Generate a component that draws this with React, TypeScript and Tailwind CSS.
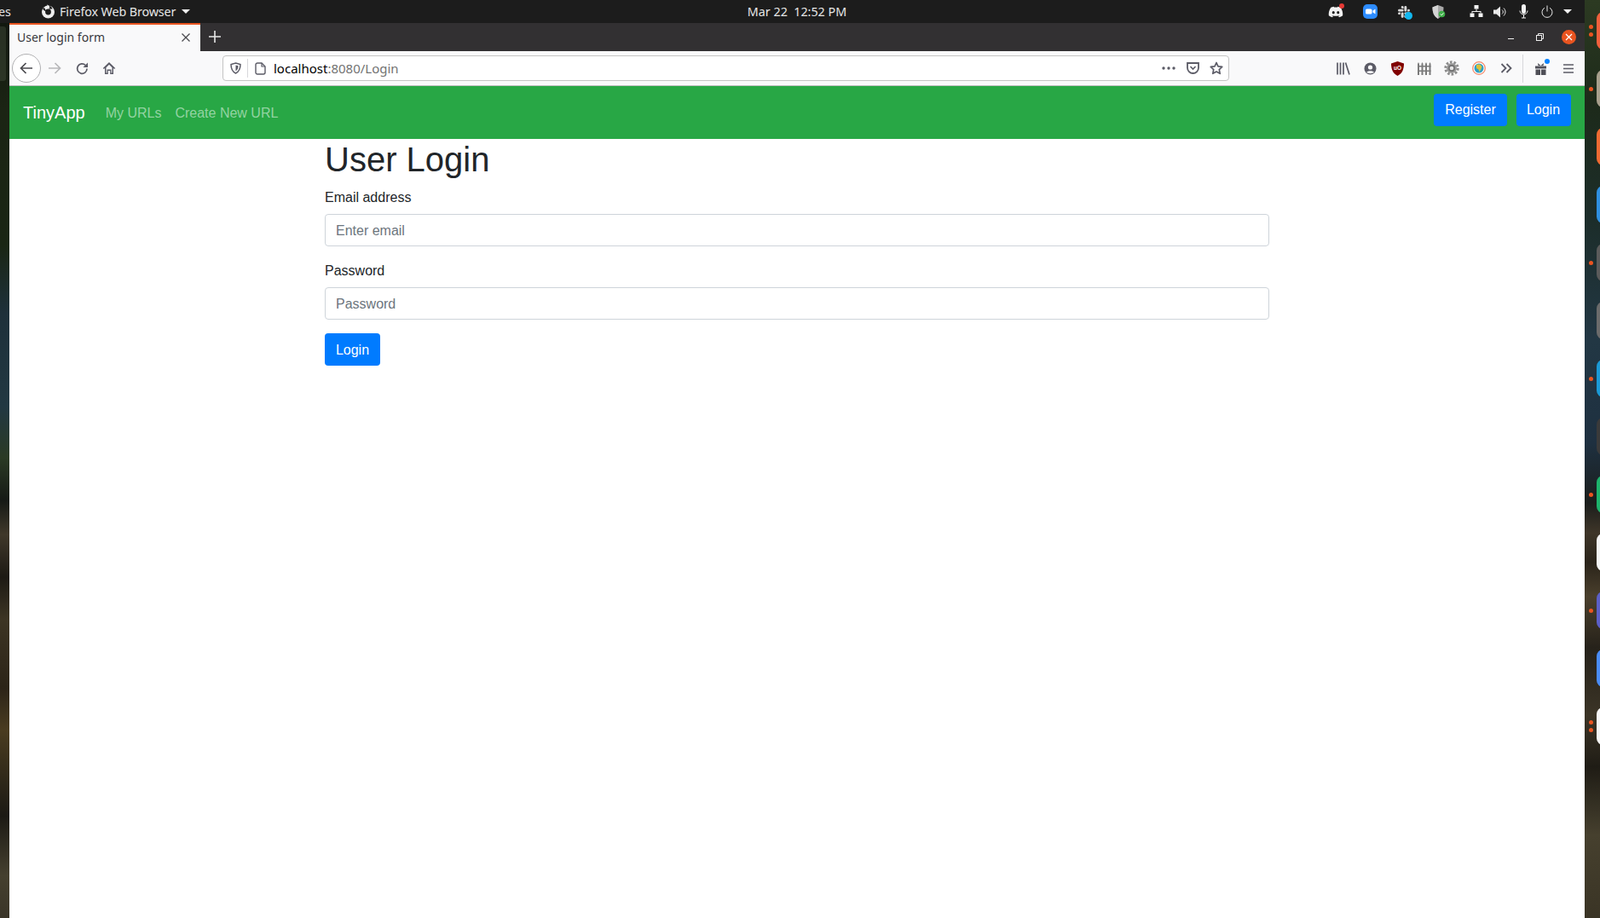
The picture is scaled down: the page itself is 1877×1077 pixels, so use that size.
import React from "react";
import { FaDiscord } from "react-icons/fa";
import { SiSlack } from "react-icons/si";

const ui = "font-['Noto_Sans','Open_Sans',sans-serif]";
const web = "font-['Liberation_Sans',Arial,sans-serif]";

const wallpaperRight =
  "bg-[linear-gradient(180deg,#2c3a22_0px,#1d2a1a_120px,#1c2d2a_260px,#223744_400px,#1e3040_520px,#1b1e1c_590px,#3e3528_625px,#2a241a_660px,#4a3f2c_700px,#26221a_760px,#3b3426_840px,#1f1c15_900px,#46402e_980px,#3a3425_1077px)]";
const wallpaperLeft =
  "bg-[linear-gradient(180deg,#12180f_0px,#1b2414_100px,#1a2614_260px,#1e303a_340px,#223842_450px,#2a3a24_510px,#161a16_560px,#40382a_600px,#1d1a14_650px,#3d3524_700px,#2c2418_780px,#4a3c20_830px,#1c1a14_930px,#45402f_1000px,#3a3528_1050px)]";

function Slot({ w, children }: { w: number; children: React.ReactNode }) {
  return (
    <div className="flex shrink-0 items-center justify-center" style={{ width: w }}>
      {children}
    </div>
  );
}

function TopBar() {
  return (
    <div className={`${ui} flex h-[27px] shrink-0 items-center bg-[#1c1c1c] text-[#e6e6e6] text-[14.3px]`}>
      <div className="flex w-[870px] shrink-0 items-center">
        <span className="ml-[-2px] w-[50px] overflow-hidden whitespace-nowrap">es</span>
        <svg width="17" height="17" viewBox="0 0 17 17" className="shrink-0">
          <circle cx="8.5" cy="9" r="7.5" fill="#eeeeee" />
          <circle cx="8.5" cy="9" r="3.4" fill="#1c1c1c" />
          <path d="M10 1c1 1.6 3 2 3.6 4.4L9.500 5.500 10 1zM2 5c1 2 2 3 4.500 3.500L4 4z" fill="#1c1c1c" />
          <path d="M7 .5c2 .5 3 2 3.500 3.500l-2 .5z" fill="#eeeeee" />
        </svg>
        <span className="ml-[5px] whitespace-nowrap tracking-[-0.1px]">Firefox Web Browser</span>
        <svg width="10" height="5" viewBox="0 0 10 5" className="ml-[7px] shrink-0"><path d="M0 0h10L5 5z" fill="#eeeeee" /></svg>
      </div>
      <span className="w-[130px] shrink-0 whitespace-pre text-center">Mar 22  12:52 PM</span>
      <div className="flex-1" />
      <div className="flex items-center">
        <Slot w={24}><span className="relative"><FaDiscord size={18} color="#f2f2f2" /><span className="absolute right-[-1px] top-[-1px] h-[6px] w-[6px] rounded-full bg-[#e53935]" /></span></Slot>
        <Slot w={56}>
          <svg width="17" height="17" viewBox="0 0 17 17"><rect width="17" height="17" rx="5" fill="#2d8cff" /><rect x="3" y="5.500" width="7.500" height="6" rx="1.500" fill="#fff" /><path d="M11.500 7.500l3-2v6l-3-2z" fill="#fff" /></svg>
        </Slot>
        <Slot w={24}><span className="relative"><SiSlack size={14} color="#d8d8d8" /><span className="absolute bottom-[-2px] right-[-3px] h-[9px] w-[9px] rounded-full bg-[#12b8f0]" /></span></Slot>
        <Slot w={58}>
          <svg width="18" height="18" viewBox="0 0 18 18"><path d="M8 1l6.500 2.500c0 6-1.500 10.500-6.500 13.500C3 14 1.500 9.500 1.500 3.500z" fill="#a8a8a8" /><path d="M8 1L1.500 3.500C1.500 9.500 3 14 8 17z" fill="#d4d4d4" /><circle cx="12.500" cy="11.500" r="3.800" fill="#3fae49" /><path d="M10.800 11.500l1.300 1.300 2.200-2.400" stroke="#fff" strokeWidth="1" fill="none" /></svg>
        </Slot>
        <Slot w={30}>
          <svg width="16" height="15" viewBox="0 0 16 15" fill="#f2f2f2"><rect x="5.500" y="0" width="5" height="4.500" /><rect x="0.500" y="9.500" width="5" height="4.500" /><rect x="10.500" y="9.500" width="5" height="4.500" /><path d="M7.500 4.500h1v2.500h5V9.500h-1V8h-9v1.500h-1V7h5z" /></svg>
        </Slot>
        <Slot w={26}>
          <svg width="16" height="14" viewBox="0 0 16 14"><path d="M0 4.500h3.500L8 .5v13L3.500 9.500H0z" fill="#e8e8e8" /><path d="M10 4.500a3 3 0 010 5M12 2.500a6 6 0 010 9" stroke="#e8e8e8" strokeWidth="1" fill="none" /></svg>
        </Slot>
        <Slot w={28}>
          <svg width="11" height="17" viewBox="0 0 11 17"><rect x="3" y="0" width="5" height="11" rx="2.500" fill="#f2f2f2" /><path d="M1 7.500a4.500 4.500 0 009 0M5.500 12v4M3 16h5" stroke="#f2f2f2" strokeWidth="1" fill="none" /></svg>
        </Slot>
        <Slot w={28}>
          <svg width="14" height="15" viewBox="0 0 14 15"><path d="M4 3.200a6 6 0 106 0M7 .5v7" stroke="#e8e8e8" strokeWidth="1" fill="none" /></svg>
        </Slot>
        <Slot w={20}><svg width="10" height="5" viewBox="0 0 10 5"><path d="M0 0h10L5 5z" fill="#f2f2f2" /></svg></Slot>
        <div className="w-[10px]" />
      </div>
    </div>
  );
}

function TabStrip() {
  return (
    <div className={`${ui} flex h-[33px] shrink-0 items-stretch bg-[#323032]`}>
      <div className="flex w-[224px] shrink-0 items-center border-t-2 border-[#e95420] bg-[#f9f9fa] pb-[2px] pl-[9px] pr-[12px] text-[14px] text-[#38383d]">
        <span className="flex-1 whitespace-nowrap">User login form</span>
        <svg width="10" height="10" viewBox="0 0 10 10"><path d="M.5.5l9 9M9.500.5l-9 9" stroke="#4a4a4f" strokeWidth="1.300" /></svg>
      </div>
      <div className="flex w-[34px] items-center justify-center pb-[1px]">
        <svg width="14" height="14" viewBox="0 0 14 14"><path d="M7 0v14M0 7h14" stroke="#e8e8e8" strokeWidth="1.600" /></svg>
      </div>
      <div className="flex-1" />
      <div className="flex items-center pr-[2px]">
        <Slot w={34}><div className="mt-[3px] h-[1px] w-[7px] bg-[#f0f0f0]" /></Slot>
        <Slot w={34}>
          <svg width="9" height="9" viewBox="0 0 9 9"><rect x=".5" y="2.500" width="6" height="6" fill="none" stroke="#f0f0f0" /><path d="M2.500 2.500V.5h6v6h-2" fill="none" stroke="#f0f0f0" /></svg>
        </Slot>
        <Slot w={34}>
          <div className="flex h-[17px] w-[17px] items-center justify-center rounded-full bg-[#e95420]">
            <svg width="9" height="9" viewBox="0 0 9 9"><path d="M1 1l7 7M8 1L1 8" stroke="#fff" strokeWidth="1.200" /></svg>
          </div>
        </Slot>
      </div>
    </div>
  );
}

const grey = "#5b5b66";

function Toolbar() {
  return (
    <div className={`${ui} flex h-[41px] shrink-0 items-center border-b border-[#bdbdbd] bg-[#f9f9fa]`}>
      <div className="ml-[3px] flex h-[34px] w-[34px] shrink-0 items-center justify-center rounded-full border border-[#b1b1b3] bg-white">
        <svg width="16" height="14" viewBox="0 0 16 14"><path d="M15 7H1.500M7.500 1l-6 6 6 6" stroke="#4a4a4f" strokeWidth="1.700" fill="none" /></svg>
      </div>
      <Slot w={32}>
        <svg width="16" height="14" viewBox="0 0 16 14"><path d="M1 7h13.500M8.500 1l6 6-6 6" stroke="#b8b8ba" strokeWidth="1.700" fill="none" /></svg>
      </Slot>
      <Slot w={32}>
        <svg width="15" height="15" viewBox="0 0 15 15"><path d="M13 7.500a5.700 5.700 0 11-1.700-4" stroke={grey} strokeWidth="1.700" fill="none" /><path d="M14 .5v5.500H8.500z" fill={grey} /></svg>
      </Slot>
      <Slot w={32}>
        <svg width="16" height="16" viewBox="0 0 16 16"><path d="M8 1L.8 8l1 1L3 8v7h3.800v-4h2.400v4H13V8l1.200 1 1-1z" fill={grey} /><path d="M4.500 7.300L8 3.800l3.500 3.500v6.200h-1v-4h-5v4h-1z" fill="#f9f9fa" /><rect x="6.500" y="10" width="3" height="1" fill={grey} /></svg>
      </Slot>
      <div className="ml-[117px] flex h-[30px] w-[1181px] shrink-0 items-center rounded-[4px] border border-[#c4c4c4] bg-white">
        <div className="flex h-[22px] w-[29px] shrink-0 items-center justify-center border-r border-[#d7d7db]">
          <svg width="13" height="14" viewBox="0 0 13 14"><path d="M6.500 1L12 2.500c0 5-1.500 8.500-5.500 10.500C2.500 11 1 7.500 1 2.500z" fill="none" stroke={grey} strokeWidth="1.500" /><path d="M6.500 3.500l3 .8c0 2.700-1 5-3 6.200z" fill={grey} /></svg>
        </div>
        <div className="flex w-[29px] shrink-0 justify-center">
          <svg width="13" height="15" viewBox="0 0 13 15"><path d="M1 3a2 2 0 012-2h5l4 4v7a2 2 0 01-2 2H3a2 2 0 01-2-2z" fill="none" stroke={grey} strokeWidth="1.400" /><path d="M8 1v4h4" fill="none" stroke={grey} strokeWidth="1.200" /></svg>
        </div>
        <span className="ml-[1px] whitespace-nowrap text-[15px] text-black">localhost<span className="text-[#737373]">:8080/Login</span></span>
        <div className="flex-1" />
        <Slot w={28}>
          <svg width="16" height="4" viewBox="0 0 16 4" fill={grey}><circle cx="2" cy="2" r="1.700" /><circle cx="8" cy="2" r="1.700" /><circle cx="14" cy="2" r="1.700" /></svg>
        </Slot>
        <Slot w={28}>
          <svg width="15" height="14" viewBox="0 0 15 14"><path d="M1 1h13v5.500a6.500 6.500 0 01-13 0z" fill="none" stroke={grey} strokeWidth="1.800" /><path d="M4.500 5l3 3 3-3" fill="none" stroke={grey} strokeWidth="1.600" /></svg>
        </Slot>
        <Slot w={28}>
          <svg width="16" height="16" viewBox="0 0 16 16"><path d="M8 1.500l2 4.300 4.700.6-3.400 3.200.9 4.700L8 12l-4.200 2.300.9-4.700L1.300 6.400 6 5.800z" fill="none" stroke={grey} strokeWidth="1.700" strokeLinejoin="round" /></svg>
        </Slot>
      </div>
      <div className="ml-[118px] flex items-center">
        <Slot w={31}>
          <svg width="16" height="15" viewBox="0 0 16 15" stroke={grey} strokeWidth="1.700" fill="none"><path d="M1 .5v14M4.500.5v14M8 .5v14M10.500.5l4.500 14" /></svg>
        </Slot>
        <Slot w={32}>
          <svg width="15" height="15" viewBox="0 0 15 15"><circle cx="7.500" cy="7.500" r="7" fill={grey} /><circle cx="7.500" cy="6" r="2.600" fill="#f9f9fa" /><path d="M3 12c1-2.500 8-2.500 9 0-2.500 1.500-6.500 1.500-9 0z" fill="#f9f9fa" /></svg>
        </Slot>
        <Slot w={32}>
          <svg width="15" height="17" viewBox="0 0 15 17"><path d="M7.500 0L15 2.500c0 7-2 11.500-7.500 14.500C2 14 0 9.500 0 2.500z" fill="#800000" /><text x="7.500" y="10" textAnchor="middle" fontSize="6.500" fontWeight="700" fill="#ffffff" fontFamily="Liberation Sans">uO</text></svg>
        </Slot>
        <Slot w={32}>
          <svg width="16" height="15" viewBox="0 0 16 15" fill="#7a7a7a"><path d="M0 2l1-2 1 2v13H0zM4.500 2l1-2 1 2v13h-2zM9 2l1-2 1 2v13H9zM13.500 2l1-2 1 2v13h-2z" /><rect x="0" y="4" width="15.500" height="1.500" /><rect x="0" y="9.500" width="15.500" height="1.500" /></svg>
        </Slot>
        <Slot w={32}>
          <svg width="18" height="18" viewBox="0 0 18 18"><circle cx="9" cy="9" r="7.200" fill="none" stroke="#8c8c8c" strokeWidth="3" strokeDasharray="2.600 1.920" /><circle cx="9" cy="9" r="6" fill="#9a9a9a" /><circle cx="9" cy="9" r="3.900" fill="#6f6f6f" /><circle cx="9" cy="9" r="2.300" fill="#e4e4e4" /></svg>
        </Slot>
        <Slot w={32}>
          <svg width="16" height="16" viewBox="0 0 16 16"><circle cx="8" cy="8" r="7.300" fill="#fff" stroke="#f58a6a" strokeWidth="1.300" /><circle cx="8" cy="8" r="5.500" fill="#2f9fc4" /><path d="M5 4l4-.5 2.500 2.500-1 3-2 3.500-1-3-2.500-1.500z" fill="#d9c13c" /></svg>
        </Slot>
        <Slot w={31}>
          <svg width="14" height="12" viewBox="0 0 14 12" fill="none" stroke={grey} strokeWidth="1.800"><path d="M1.500 1l5 5-5 5M7.500 1l5 5-5 5" /></svg>
        </Slot>
        <div className="ml-[4px] h-[33px] w-[1px] bg-[#d7d7db]" />
        <Slot w={41}>
          <span className="relative">
            <svg width="15" height="15" viewBox="0 0 15 15" fill="#4f4f57"><path d="M1 4.500h13v3H1zM1.500 8.500H7V15H1.500zM8 8.500h5.500V15H8zM4 1l3.500 3H4.500zM11 1L7.500 4h3z" /></svg>
            <span className="absolute right-[-3px] top-[-4px] h-[6px] w-[6px] rounded-full bg-[#0a84ff]" />
          </span>
        </Slot>
        <Slot w={23}>
          <svg width="12" height="11" viewBox="0 0 12 11" stroke={grey} strokeWidth="1.700"><path d="M0 1h12M0 5.500h12M0 10h12" /></svg>
        </Slot>
      </div>
    </div>
  );
}

function Navbar() {
  return (
    <nav className={`${web} flex h-[62px] shrink-0 items-center bg-[#28a745] px-4 pt-[1px]`}>
      <span className="mb-[2px] mr-[24px] text-[20px] text-white">TinyApp</span>
      <span className="mr-[16px] mt-[1px] text-[16px] text-[#93d3a2]">My URLs</span>
      <span className="mt-[1px] text-[16px] text-[#93d3a2]">Create New URL</span>
      <div className="flex-1" />
      <div className="mt-[-7px] flex gap-[11px]">
        <button className="h-[38px] w-[86px] rounded-[4px] bg-[#007bff] text-[16px] text-white">Register</button>
        <button className="h-[38px] w-[64px] rounded-[4px] bg-[#007bff] pr-[1px] text-[16px] text-white">Login</button>
      </div>
    </nav>
  );
}

function LoginForm() {
  return (
    <main className={`${web} mx-auto w-[1140px] px-[16px] text-[#212529]`}>
      <h1 className="mb-2 text-[40px] leading-[48px]">User Login</h1>
      <label className="mb-[7px] block pt-[1px] text-[16px] leading-6">Email address</label>
      <input
        placeholder="Enter email"
        className="mb-4 block h-[38px] w-full rounded-[4px] border border-[#ced4da] px-3 pt-[1px] text-[16px] placeholder:text-[#6c757d]"
      />
      <label className="mb-[7px] block pt-[1px] text-[16px] leading-6">Password</label>
      <input
        placeholder="Password"
        className="mb-4 block h-[38px] w-full rounded-[4px] border border-[#ced4da] px-3 pt-[1px] text-[16px] placeholder:text-[#6c757d]"
      />
      <button className="h-[38px] w-[65px] rounded-[4px] bg-[#007bff] pt-[1px] text-[16px] text-white">Login</button>
    </main>
  );
}

const dock: { color: string; dots: number }[] = [
  { color: "bg-[#f0603c]", dots: 2 },
  { color: "bg-[#a89f8c]", dots: 1 },
  { color: "bg-[#ef6a32]", dots: 0 },
  { color: "bg-[#2e8fe0]", dots: 0 },
  { color: "bg-[#5b5b5b]", dots: 1 },
  { color: "bg-[#6b6b6b]", dots: 0 },
  { color: "bg-[#1b9ad6]", dots: 1 },
  { color: "bg-[#3a3a3a]", dots: 0 },
  { color: "bg-[#1db36b]", dots: 1 },
  { color: "bg-[#f4f4f4]", dots: 0 },
  { color: "bg-[#5b5fc7]", dots: 1 },
  { color: "bg-[#4a8cf7]", dots: 0 },
  { color: "bg-[#f6f6f6]", dots: 2 },
];

function Dock() {
  return (
    <aside className={`${wallpaperRight} flex h-[1077px] w-[18px] shrink-0 flex-col overflow-hidden pt-[2px]`}>
      {dock.map((d, i) => (
        <div key={i} className="flex h-[68px] shrink-0 items-center pl-[5px]">
          <div className="flex w-[5px] shrink-0 flex-col items-center gap-[4px]">
            {Array.from({ length: d.dots }).map((_, j) => (
              <span key={j} className="h-[5px] w-[5px] shrink-0 rounded-full bg-[#e95420]" />
            ))}
          </div>
          <div className={`ml-[4px] h-[44px] w-[44px] shrink-0 rounded-[8px] ${d.color}`} />
        </div>
      ))}
    </aside>
  );
}

export default function App() {
  return (
    <div className="flex h-[1077px] w-[1877px] overflow-hidden bg-black">
      <div className="flex w-[1859px] shrink-0 flex-col">
        <TopBar />
        <div className="flex flex-1">
          <div className={`${wallpaperLeft} w-[11px] shrink-0 pt-[4px]`}>
            <div className="h-[64px] w-[7px] rounded-r-[3px] bg-[#7c8a7433]" />
          </div>
          <div className="flex min-w-0 flex-1 flex-col bg-white">
            <TabStrip />
            <Toolbar />
            <Navbar />
            <LoginForm />
          </div>
        </div>
      </div>
      <Dock />
    </div>
  );
}
